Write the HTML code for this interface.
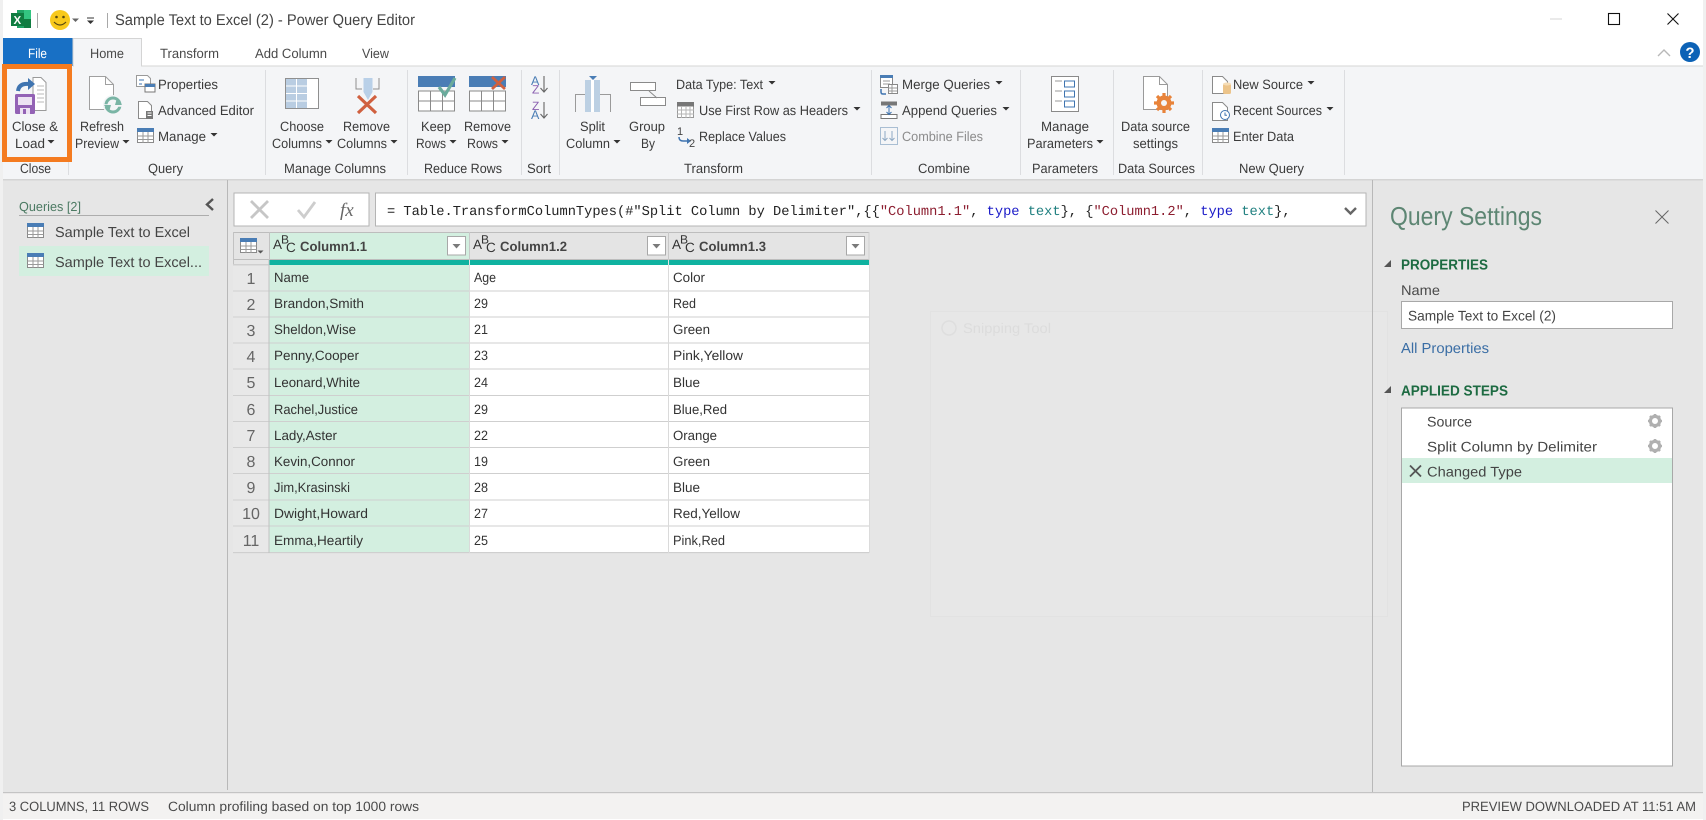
<!DOCTYPE html>
<html><head><meta charset="utf-8"><title>Power Query Editor</title>
<style>
html,body{margin:0;padding:0;background:#f0f0f0;width:1706px;height:820px;overflow:hidden}
svg{display:block}
text{font-family:"Liberation Sans",sans-serif;font-size:13.5px;fill:#3b3b3b;text-rendering:geometricPrecision}
.c{fill:#333;font-size:13.5px}
.g{fill:#4a4a4a;font-size:13.5px}
.h{font-weight:bold;font-size:13.5px;fill:#444}
.n{font-size:16px;fill:#666;text-anchor:middle}
.a{font-size:13.5px;fill:#333}
.s{fill:#1d6b42;font-weight:bold;font-size:14.5px}
.st{font-size:14px;fill:#444}
.m{font-family:"Liberation Mono",monospace;font-size:13.7px;fill:#222}
</style></head><body>
<svg width="1706" height="820" viewBox="0 0 1706 820" xmlns="http://www.w3.org/2000/svg">
<defs>
<g id="tbl"><rect x=".5" y=".5" width="16" height="14" fill="#fff" stroke="#8a8a8a"/><rect x="0" y="0" width="17" height="4" fill="#4a7db5"/><path d="M.5 8h16M.5 11.5h16M6 4v11M11 4v11" stroke="#9a9a9a" fill="none"/></g>
<g id="gear"><circle r="4.6" fill="none" stroke="#b0b0b0" stroke-width="3.2"/><path d="M0-7v3M0 4v3M-7 0h3M4 0h3M-5-5l2 2M3 3l2 2M-5 5l2-2M3-3l2-2" stroke="#b0b0b0" stroke-width="2.6"/></g>
<g id="flt"><rect x=".5" y=".5" width="18" height="18.5" fill="#fff" stroke="#a8a8a8"/><path d="M5.5 8h8l-4 4.5z" fill="#7a7a7a"/></g>
<g id="abc"><text x="0" y="17" class="a">A</text><text x="8" y="11.500" style="font-size:12px;fill:#333">B</text><text x="13" y="20" class="a">C</text></g>
<path id="car" d="M0 0h7l-3.5 3.5z" fill="#333"/>
</defs>

<!-- window -->
<rect x="3" y="0" width="1700" height="820" fill="#fff"/>
<rect x="3" y="180" width="1700" height="612" fill="#e6e6e6"/>
<rect x="3" y="66" width="1700" height="113" fill="#f4f5f7"/>
<rect x="3" y="179" width="1700" height="1.5" fill="#d4d4d4"/>
<rect x="3" y="793" width="1700" height="26" fill="#f3f2f1"/>
<rect x="3" y="792" width="1700" height="1.2" fill="#c4c4c4"/>

<!-- title bar -->
<rect x="17" y="10" width="14" height="18" fill="#21a366"/><rect x="24" y="10" width="7" height="9" fill="#33c481"/><rect x="24" y="19" width="7" height="9" fill="#107c41"/>
<rect x="11" y="13" width="13" height="13" fill="#107c41"/>
<text x="13.5" y="24" style="font-size:11.5px;font-weight:bold;fill:#fff">X</text>
<rect x="37" y="13" width="1" height="15" fill="#a8a8a8"/>
<circle cx="60" cy="20" r="10" fill="#f8c91c"/>
<circle cx="56.5" cy="17" r="1.3" fill="#5a4a10"/><circle cx="63.5" cy="17" r="1.3" fill="#5a4a10"/>
<path d="M54 22q6 6 12 0" fill="none" stroke="#5a4a10" stroke-width="1.2"/>
<path d="M72 18.500h7l-3.500 3.500z" fill="#666"/>
<path d="M87 18h7" stroke="#333" stroke-width="1"/><path d="M87 20.500h7l-3.500 3.500z" fill="#333"/>
<rect x="107" y="13" width="1" height="15" fill="#a8a8a8"/>
<text x="115" y="25" textLength="300" lengthAdjust="spacingAndGlyphs" style="font-size:15.500px;fill:#444">Sample Text to Excel (2) - Power Query Editor</text>
<rect x="1550" y="18.500" width="12" height="1" fill="#d4d4d4"/>
<rect x="1608.500" y="13.500" width="11" height="11" fill="none" stroke="#111" stroke-width="1.1"/>
<path d="M1667.500 13.500l11 11M1678.500 13.500l-11 11" stroke="#111" stroke-width="1.1"/>
<path d="M1658 56l6-6 6 6" fill="none" stroke="#b8b8b8" stroke-width="1.4"/>
<circle cx="1690" cy="52" r="10" fill="#0c62b6"/>
<text x="1690" y="58" text-anchor="middle" style="font-size:15px;font-weight:bold;fill:#fff">?</text>

<!-- tabs -->
<rect x="3" y="38" width="70" height="28" fill="#1870c5"/>
<text x="28" y="58" textLength="19" lengthAdjust="spacingAndGlyphs" style="fill:#fff;font-size:13.5px">File</text>
<path d="M73 66V38.500H141.500V66" fill="#f4f5f7" stroke="#d4d4d4"/>
<rect x="73" y="65.500" width="1630" height="1" fill="#d6d6d6"/><rect x="74" y="65" width="67" height="2" fill="#f4f5f7"/>
<text x="90" y="58" textLength="34" lengthAdjust="spacingAndGlyphs" class="g">Home</text>
<text x="160" y="58" textLength="59" lengthAdjust="spacingAndGlyphs" class="g">Transform</text>
<text x="255" y="58" textLength="72" lengthAdjust="spacingAndGlyphs" class="g">Add Column</text>
<text x="362" y="58" textLength="27" lengthAdjust="spacingAndGlyphs" class="g">View</text>

<!-- group separators -->
<g fill="#dcdde0"><rect x="68" y="70" width="1" height="105"/><rect x="265" y="70" width="1" height="105"/><rect x="407" y="70" width="1" height="105"/><rect x="521" y="70" width="1" height="105"/><rect x="559" y="70" width="1" height="105"/><rect x="871" y="70" width="1" height="105"/><rect x="1020" y="70" width="1" height="105"/><rect x="1113" y="70" width="1" height="105"/><rect x="1202" y="70" width="1" height="105"/><rect x="1344" y="70" width="1" height="105"/></g>

<!-- Close & Load -->
<path d="M33 77.500h8l5 5v28H33z" fill="#fff" stroke="#9a9a9a"/><path d="M37 86h7M37 90h7M37 94h7M37 98h7M37 102h7" stroke="#b8b8b8"/>
<path d="M18 91q1-8 11-7" fill="none" stroke="#3f74b0" stroke-width="4"/><path d="M28 78l7 6-7 6z" fill="#3f74b0"/>
<rect x="15" y="94" width="20" height="20" rx="1.500" fill="#9362b5"/><rect x="18" y="97" width="14" height="8" fill="#ece2f2"/><rect x="20" y="108" width="10" height="6" fill="#ece2f2"/><rect x="23" y="109" width="3" height="5" fill="#9362b5"/>
<rect x="4.500" y="66.500" width="65" height="93" fill="none" stroke="#f47b20" stroke-width="5"/>
<text x="12" y="131" textLength="46" lengthAdjust="spacingAndGlyphs">Close &amp;</text>
<text x="15" y="148" textLength="30" lengthAdjust="spacingAndGlyphs">Load</text><use href="#car" x="47.500" y="140"/>
<text x="20" y="173" textLength="31" lengthAdjust="spacingAndGlyphs">Close</text>

<!-- Query -->
<path d="M89.500 76.500h16l8 8v25h-24z" fill="#fff" stroke="#a0a0a0"/><path d="M105.500 76.500v8h8" fill="none" stroke="#a0a0a0"/>
<circle cx="113" cy="105" r="10" fill="#f4f5f7"/>
<circle cx="113" cy="105" r="7" fill="none" stroke="#7ab5a5" stroke-width="3"/>
<path d="M103 105.500h20" stroke="#f4f5f7" stroke-width="2.600"/>
<path d="M117 98l5 7h-7zM109 112l-5-7h7z" fill="#7ab5a5"/>
<path d="M136.500 75.500h11l3 3v8h-14z" fill="#fff" stroke="#9a9a9a"/><path d="M139 80h5M139 84h3" stroke="#3f74b0"/>
<rect x="145" y="84" width="10" height="8" fill="#fff" stroke="#777"/><rect x="145" y="84" width="10" height="3" fill="#4a7db5"/>
<text x="158" y="89" textLength="60" lengthAdjust="spacingAndGlyphs">Properties</text>
<path d="M138.500 101.500h9l4 4v13h-13z" fill="#fff" stroke="#8a8a8a"/><rect x="146" y="111" width="7" height="8" fill="#777"/><path d="M147.500 113h4M147.500 115.500h4" stroke="#fff"/>
<text x="158" y="115" textLength="96" lengthAdjust="spacingAndGlyphs">Advanced Editor</text>
<use href="#tbl" x="137" y="128"/>
<text x="158" y="141" textLength="48" lengthAdjust="spacingAndGlyphs">Manage</text><use href="#car" x="210.500" y="133"/>
<text x="80" y="131" textLength="44" lengthAdjust="spacingAndGlyphs">Refresh</text>
<text x="75" y="148" textLength="44" lengthAdjust="spacingAndGlyphs">Preview</text><use href="#car" x="122.500" y="140"/>
<text x="148" y="173" textLength="35" lengthAdjust="spacingAndGlyphs">Query</text>

<!-- Manage Columns -->
<rect x="285.500" y="78.500" width="33" height="30" fill="#fff" stroke="#8f8f8f"/><rect x="286" y="79" width="21" height="29" fill="#b9cde2"/>
<path d="M286 86h32M286 93.500h32M286 101h32M296.500 79v29M307.500 79v29" stroke="#fff" stroke-width="1"/>
<path d="M356 78v11h6M379 78v11h-6" fill="none" stroke="#8f8f8f"/><path d="M363.500 78h9v14l-4.500 8-4.500-8z" fill="#b9d0e8"/>
<path d="M358 96l18 17M376 96l-18 17" stroke="#d0603f" stroke-width="3.200"/>
<text x="280" y="131" textLength="44" lengthAdjust="spacingAndGlyphs">Choose</text>
<text x="272" y="148" textLength="50" lengthAdjust="spacingAndGlyphs">Columns</text><use href="#car" x="325.500" y="140"/>
<text x="343" y="131" textLength="47" lengthAdjust="spacingAndGlyphs">Remove</text>
<text x="337" y="148" textLength="50" lengthAdjust="spacingAndGlyphs">Columns</text><use href="#car" x="390.500" y="140"/>
<text x="284" y="173" textLength="102" lengthAdjust="spacingAndGlyphs">Manage Columns</text>

<!-- Reduce Rows -->
<rect x="418" y="76" width="37" height="11" fill="#4a7db5"/>
<rect x="418.500" y="91" width="36" height="20" fill="#fff" stroke="#8a8a8a"/><path d="M418 101h37M430.500 91v20M442.500 91v20" stroke="#8a8a8a"/>
<path d="M439 87l6 8 10-17" fill="none" stroke="#6aab9c" stroke-width="3.200"/>
<rect x="469" y="76" width="37" height="11" fill="#4a7db5"/>
<rect x="469.500" y="91" width="36" height="20" fill="#fff" stroke="#8a8a8a"/><path d="M469 101h37M481.500 91v20M493.500 91v20" stroke="#8a8a8a"/>
<path d="M492 77l13 12M505 77l-13 12" stroke="#d0603f" stroke-width="2.800"/>
<text x="421" y="131" textLength="30" lengthAdjust="spacingAndGlyphs">Keep</text>
<text x="416" y="148" textLength="30" lengthAdjust="spacingAndGlyphs">Rows</text><use href="#car" x="449.500" y="140"/>
<text x="464" y="131" textLength="47" lengthAdjust="spacingAndGlyphs">Remove</text>
<text x="467" y="148" textLength="31" lengthAdjust="spacingAndGlyphs">Rows</text><use href="#car" x="501.500" y="140"/>
<text x="424" y="173" textLength="78" lengthAdjust="spacingAndGlyphs">Reduce Rows</text>

<!-- Sort -->
<text x="531" y="85" style="font-size:12.500px;fill:#4a7db5">A</text><text x="532" y="93.500" style="font-size:12px;fill:#8a5fb0">Z</text>
<path d="M544 76v16M540.500 88l3.500 4 3.500-4" fill="none" stroke="#666" stroke-width="1.100"/>
<text x="532" y="110" style="font-size:12px;fill:#8a5fb0">Z</text><text x="531" y="119" style="font-size:12.500px;fill:#4a7db5">A</text>
<path d="M544 102v16M540.500 114l3.500 4 3.500-4" fill="none" stroke="#666" stroke-width="1.100"/>
<text x="527" y="173" textLength="24" lengthAdjust="spacingAndGlyphs">Sort</text>

<!-- Transform -->
<path d="M575.500 112V94.500H585M600 94.500h10.500V112" fill="none" stroke="#9a9a9a"/>
<rect x="585" y="80" width="15" height="32" fill="#bcd0e3"/><rect x="591" y="80" width="3" height="32" fill="#fff"/>
<path d="M589 76h8l-4 4z" fill="#4a7db5"/>
<text x="580" y="131" textLength="25" lengthAdjust="spacingAndGlyphs">Split</text>
<text x="566" y="148" textLength="44" lengthAdjust="spacingAndGlyphs">Column</text><use href="#car" x="613.500" y="140"/>
<rect x="630.500" y="82.500" width="25" height="8" fill="#fff" stroke="#8a8a8a"/><rect x="640.500" y="97.500" width="25" height="8" fill="#fff" stroke="#8a8a8a"/><path d="M649 91l8 7" stroke="#8a8a8a"/>
<text x="629" y="131" textLength="36" lengthAdjust="spacingAndGlyphs">Group</text>
<text x="641" y="148" textLength="14" lengthAdjust="spacingAndGlyphs">By</text>
<text x="676" y="89" textLength="87" lengthAdjust="spacingAndGlyphs">Data Type: Text</text><use href="#car" x="768.500" y="81"/>
<rect x="677.500" y="102.500" width="16" height="15" fill="#fff" stroke="#999"/><rect x="677" y="102" width="17" height="4.500" fill="#777"/><path d="M677 110h17M677 114h17M681.500 106v12M686 106v12M690 106v12" stroke="#b5b5b5"/>
<text x="699" y="115" textLength="149" lengthAdjust="spacingAndGlyphs">Use First Row as Headers</text><use href="#car" x="853.500" y="107"/>
<text x="677" y="135" style="font-size:11px;fill:#444">1</text><path d="M679 137q0 4 4 4h6" fill="none" stroke="#3f74b0" stroke-width="1.500"/><path d="M687 138l4 3-4 3z" fill="#3f74b0"/><text x="689" y="147" style="font-size:11px;fill:#444">2</text>
<text x="699" y="141" textLength="87" lengthAdjust="spacingAndGlyphs">Replace Values</text>
<text x="684" y="173" textLength="59" lengthAdjust="spacingAndGlyphs">Transform</text>

<!-- Combine -->
<rect x="880.500" y="75.500" width="12" height="12" fill="#fff" stroke="#888"/><rect x="880" y="75" width="13" height="3" fill="#4a7db5"/><path d="M883 81h7M883 84h7" stroke="#999"/>
<rect x="888.500" y="84.500" width="9" height="9" fill="#fff" stroke="#888"/><path d="M888 88h9M888 91h9M892 85v8" stroke="#999"/>
<path d="M881 89v3q0 2 2 2h3" fill="none" stroke="#3f74b0" stroke-width="1.500"/>
<text x="902" y="89" textLength="88" lengthAdjust="spacingAndGlyphs">Merge Queries</text><use href="#car" x="995.500" y="81"/>
<rect x="881" y="101.500" width="16" height="4" fill="#777"/><rect x="881" y="114.500" width="16" height="4" fill="#fff" stroke="#777"/><path d="M889 106v8M886.500 108l2.500-2.500 2.500 2.500M886.500 112l2.500 2.500 2.500-2.500" fill="none" stroke="#3f74b0"/>
<text x="902" y="115" textLength="95" lengthAdjust="spacingAndGlyphs">Append Queries</text><use href="#car" x="1002.500" y="107"/>
<rect x="880.500" y="127.500" width="17" height="17" fill="none" stroke="#a9bed3"/><path d="M885 131v9M882.500 138l2.500 2.500 2.500-2.500M892 131v9M889.500 138l2.500 2.500 2.500-2.500" fill="none" stroke="#8ea9c4"/>
<text x="902" y="141" textLength="81" lengthAdjust="spacingAndGlyphs" style="fill:#8c8c8c">Combine Files</text>
<text x="918" y="173" textLength="52" lengthAdjust="spacingAndGlyphs">Combine</text>

<!-- Parameters -->
<rect x="1051.500" y="76.500" width="27" height="35" fill="#fff" stroke="#8a8a8a"/>
<path d="M1055 81h7M1055 91h7M1055 101h7" stroke="#9a9a9a"/>
<rect x="1064.500" y="81" width="10" height="6" fill="#fff" stroke="#3f74b0"/><rect x="1064.500" y="91" width="10" height="6" fill="#fff" stroke="#3f74b0"/><rect x="1064.500" y="101" width="10" height="6" fill="#fff" stroke="#3f74b0"/>
<text x="1041" y="131" textLength="48" lengthAdjust="spacingAndGlyphs">Manage</text>
<text x="1027" y="148" textLength="66" lengthAdjust="spacingAndGlyphs">Parameters</text><use href="#car" x="1096.500" y="140"/>
<text x="1032" y="173" textLength="66" lengthAdjust="spacingAndGlyphs">Parameters</text>

<!-- Data Sources -->
<path d="M1143.500 76.500h16l8 8v25h-24z" fill="#fff" stroke="#9a9a9a"/><path d="M1159.500 76.500v8h8" fill="none" stroke="#9a9a9a"/>
<circle cx="1164" cy="103" r="5.500" fill="none" stroke="#e8833a" stroke-width="4"/><path d="M1164 93v20M1154 103h20M1157 96l14 14M1171 96l-14 14" stroke="#e8833a" stroke-width="3.200"/><circle cx="1164" cy="103" r="3" fill="#f4f5f7"/>
<text x="1121" y="131" textLength="69" lengthAdjust="spacingAndGlyphs">Data source</text>
<text x="1133" y="148" textLength="45" lengthAdjust="spacingAndGlyphs">settings</text>
<text x="1118" y="173" textLength="77" lengthAdjust="spacingAndGlyphs">Data Sources</text>

<!-- New Query -->
<path d="M1212.500 76.500h10l5 5v12h-15z" fill="#fff" stroke="#8a8a8a"/><rect x="1223" y="84" width="8" height="10" rx="1.500" fill="#ecc48a"/><ellipse cx="1227" cy="84" rx="4" ry="1.500" fill="#f5dcb5"/>
<text x="1233" y="89" textLength="70" lengthAdjust="spacingAndGlyphs">New Source</text><use href="#car" x="1307.500" y="81"/>
<path d="M1212.500 102.500h10l5 5v13h-15z" fill="#fff" stroke="#8a8a8a"/><circle cx="1225" cy="115" r="4.500" fill="#fff" stroke="#3f74b0"/><path d="M1225 112.500v2.800h2" fill="none" stroke="#3f74b0"/>
<text x="1233" y="115" textLength="89" lengthAdjust="spacingAndGlyphs">Recent Sources</text><use href="#car" x="1326.500" y="107"/>
<use href="#tbl" x="1212" y="128"/>
<text x="1233" y="141" textLength="61" lengthAdjust="spacingAndGlyphs">Enter Data</text>
<text x="1239" y="173" textLength="65" lengthAdjust="spacingAndGlyphs">New Query</text>

<!-- dividers -->
<rect x="227" y="180" width="1" height="610" fill="#b8b8b8"/>
<rect x="1372" y="180" width="1" height="612" fill="#b8b8b8"/>

<!-- snipping ghost -->
<rect x="930.500" y="311.500" width="457" height="305" fill="#e7e7e7" stroke="#e2e2e2"/>
<circle cx="949" cy="328" r="7" fill="none" stroke="#dedede" stroke-width="1.500"/>
<text x="963" y="333" textLength="88" lengthAdjust="spacingAndGlyphs" style="fill:#dcdcdc;font-size:14px">Snipping Tool</text>
<rect x="1372" y="311" width="1" height="306" fill="#b8b8b8"/>

<!-- queries pane -->
<text x="19" y="211" textLength="62" lengthAdjust="spacingAndGlyphs" style="fill:#4c7a63;font-size:13px">Queries [2]</text>
<rect x="19" y="215" width="190" height="1" fill="#adadad"/>
<path d="M213 199l-6 5.500 6 5.500" fill="none" stroke="#555" stroke-width="2.400"/>
<use href="#tbl" x="27" y="223"/>
<text x="55" y="237" textLength="135" lengthAdjust="spacingAndGlyphs" style="font-size:14.500px;fill:#444">Sample Text to Excel</text>
<rect x="19" y="246" width="190" height="30" fill="#d3efe0"/>
<use href="#tbl" x="27" y="253"/>
<text x="55" y="267" textLength="147" lengthAdjust="spacingAndGlyphs" style="font-size:14.500px;fill:#444">Sample Text to Excel...</text>

<!-- formula bar -->
<rect x="234" y="193" width="135" height="33" fill="#fff" stroke="#b4b4b4"/>
<path d="M251 201l17 17M268 201l-17 17" stroke="#c6c6c6" stroke-width="2.800"/>
<path d="M298 210l6 7 11-15" fill="none" stroke="#cdcdcd" stroke-width="2.800"/>
<text x="340" y="216" style="font-family:'Liberation Serif',serif;font-style:italic;font-size:19px;fill:#666">fx</text>
<rect x="375.500" y="193" width="990.500" height="33" fill="#fff" stroke="#b4b4b4"/>
<text x="387" y="215" class="m" xml:space="preserve">= Table.TransformColumnTypes(#"Split Column by Delimiter",{{<tspan fill="#8c1d2f">"Column1.1"</tspan>, <tspan fill="#1a1ac8">type</tspan> <tspan fill="#1f7f7f">text</tspan>}, {<tspan fill="#8c1d2f">"Column1.2"</tspan>, <tspan fill="#1a1ac8">type</tspan> <tspan fill="#1f7f7f">text</tspan>},</text>
<path d="M1345 208l5.500 5.500 5.500-5.500" fill="none" stroke="#666" stroke-width="2.400"/>

<!-- table header -->
<rect x="233" y="232" width="636" height="28" fill="#e4e4e4"/>
<rect x="269" y="233" width="200" height="27" fill="#d3efe0"/>
<rect x="233" y="232" width="636" height="1" fill="#bdbdbd"/>
<rect x="233" y="259" width="636" height="1" fill="#bdbdbd"/>
<rect x="233" y="232" width="1" height="321" fill="#c2c2c2"/>
<rect x="868.500" y="232" width="1" height="321" fill="#d0d0d0"/>
<rect x="269" y="232" width="1" height="28" fill="#c2c2c2"/><rect x="469" y="232" width="1" height="28" fill="#c8c8c8"/><rect x="668" y="232" width="1" height="28" fill="#c8c8c8"/>
<use href="#tbl" x="240" y="238"/><path d="M257.500 250.500h6l-3 3z" fill="#555"/>
<use href="#abc" x="273" y="232"/><text x="300" y="251" textLength="67" lengthAdjust="spacingAndGlyphs" class="h">Column1.1</text><use href="#flt" x="447" y="236"/>
<use href="#abc" x="473" y="232"/><text x="500" y="251" textLength="67" lengthAdjust="spacingAndGlyphs" class="h">Column1.2</text><use href="#flt" x="647" y="236"/>
<use href="#abc" x="672" y="232"/><text x="699" y="251" textLength="67" lengthAdjust="spacingAndGlyphs" class="h">Column1.3</text><use href="#flt" x="846" y="236"/>
<rect x="269" y="260" width="600" height="5" fill="#0fb2a0"/>
<rect x="469" y="260" width="1" height="5" fill="#e4e4e4"/><rect x="668" y="260" width="1" height="5" fill="#e4e4e4"/>

<!-- table body -->
<rect x="233" y="265" width="36" height="288" fill="#e8e8e8"/>
<rect x="269" y="265" width="200" height="288" fill="#d3efe0"/>
<rect x="469" y="265" width="400" height="288" fill="#fff"/>
<g fill="#cfcfcf"><rect x="233" y="264" width="36" height="1.500"/><rect x="233" y="290.500" width="636" height="1"/><rect x="233" y="316.500" width="636" height="1"/><rect x="233" y="342.500" width="636" height="1"/><rect x="233" y="368.500" width="636" height="1"/><rect x="233" y="395" width="636" height="1"/><rect x="233" y="421" width="636" height="1"/><rect x="233" y="447" width="636" height="1"/><rect x="233" y="473" width="636" height="1"/><rect x="233" y="499.500" width="636" height="1"/><rect x="233" y="525.500" width="636" height="1"/><rect x="233" y="552" width="636" height="1.200"/></g>
<g fill="#c2c2c2"><rect x="268.500" y="259" width="1" height="294"/></g>
<rect x="469" y="265" width="1" height="288" fill="#dadada"/><rect x="668" y="265" width="1" height="288" fill="#dadada"/>

<text x="251" y="284" class="n">1</text><text x="274" y="282" textLength="35" lengthAdjust="spacingAndGlyphs" class="c">Name</text><text x="474" y="282" textLength="22" lengthAdjust="spacingAndGlyphs" class="c">Age</text><text x="673" y="282" textLength="32" lengthAdjust="spacingAndGlyphs" class="c">Color</text>
<text x="251" y="310" class="n">2</text><text x="274" y="308" textLength="90" lengthAdjust="spacingAndGlyphs" class="c">Brandon,Smith</text><text x="474" y="308" textLength="14" lengthAdjust="spacingAndGlyphs" class="c">29</text><text x="673" y="308" textLength="23" lengthAdjust="spacingAndGlyphs" class="c">Red</text>
<text x="251" y="336" class="n">3</text><text x="274" y="334" textLength="82" lengthAdjust="spacingAndGlyphs" class="c">Sheldon,Wise</text><text x="474" y="334" textLength="14" lengthAdjust="spacingAndGlyphs" class="c">21</text><text x="673" y="334" textLength="37" lengthAdjust="spacingAndGlyphs" class="c">Green</text>
<text x="251" y="362" class="n">4</text><text x="274" y="360" textLength="85" lengthAdjust="spacingAndGlyphs" class="c">Penny,Cooper</text><text x="474" y="360" textLength="14" lengthAdjust="spacingAndGlyphs" class="c">23</text><text x="673" y="360" textLength="70" lengthAdjust="spacingAndGlyphs" class="c">Pink,Yellow</text>
<text x="251" y="388" class="n">5</text><text x="274" y="387" textLength="86" lengthAdjust="spacingAndGlyphs" class="c">Leonard,White</text><text x="474" y="387" textLength="14" lengthAdjust="spacingAndGlyphs" class="c">24</text><text x="673" y="387" textLength="27" lengthAdjust="spacingAndGlyphs" class="c">Blue</text>
<text x="251" y="415" class="n">6</text><text x="274" y="414" textLength="84" lengthAdjust="spacingAndGlyphs" class="c">Rachel,Justice</text><text x="474" y="414" textLength="14" lengthAdjust="spacingAndGlyphs" class="c">29</text><text x="673" y="414" textLength="54" lengthAdjust="spacingAndGlyphs" class="c">Blue,Red</text>
<text x="251" y="441" class="n">7</text><text x="274" y="440" textLength="63" lengthAdjust="spacingAndGlyphs" class="c">Lady,Aster</text><text x="474" y="440" textLength="14" lengthAdjust="spacingAndGlyphs" class="c">22</text><text x="673" y="440" textLength="44" lengthAdjust="spacingAndGlyphs" class="c">Orange</text>
<text x="251" y="467" class="n">8</text><text x="274" y="466" textLength="81" lengthAdjust="spacingAndGlyphs" class="c">Kevin,Connor</text><text x="474" y="466" textLength="14" lengthAdjust="spacingAndGlyphs" class="c">19</text><text x="673" y="466" textLength="37" lengthAdjust="spacingAndGlyphs" class="c">Green</text>
<text x="251" y="493" class="n">9</text><text x="274" y="492" textLength="76" lengthAdjust="spacingAndGlyphs" class="c">Jim,Krasinski</text><text x="474" y="492" textLength="14" lengthAdjust="spacingAndGlyphs" class="c">28</text><text x="673" y="492" textLength="27" lengthAdjust="spacingAndGlyphs" class="c">Blue</text>
<text x="251" y="519" class="n">10</text><text x="274" y="518" textLength="94" lengthAdjust="spacingAndGlyphs" class="c">Dwight,Howard</text><text x="474" y="518" textLength="14" lengthAdjust="spacingAndGlyphs" class="c">27</text><text x="673" y="518" textLength="67" lengthAdjust="spacingAndGlyphs" class="c">Red,Yellow</text>
<text x="251" y="546" class="n">11</text><text x="274" y="545" textLength="89" lengthAdjust="spacingAndGlyphs" class="c">Emma,Heartily</text><text x="474" y="545" textLength="14" lengthAdjust="spacingAndGlyphs" class="c">25</text><text x="673" y="545" textLength="52" lengthAdjust="spacingAndGlyphs" class="c">Pink,Red</text>

<!-- query settings -->
<text x="1390" y="225" textLength="152" lengthAdjust="spacingAndGlyphs" style="font-size:26px;fill:#5d8673">Query Settings</text>
<path d="M1655.500 210.500l13 13M1668.500 210.500l-13 13" stroke="#666" stroke-width="1"/>
<path d="M1391 260v7h-7z" fill="#555"/>
<text x="1401" y="269.500" textLength="87" lengthAdjust="spacingAndGlyphs" class="s">PROPERTIES</text>
<text x="1401" y="295" textLength="39" lengthAdjust="spacingAndGlyphs" class="g" style="font-size:14px">Name</text>
<rect x="1401.500" y="301.500" width="271" height="27" fill="#fff" stroke="#a8a8a8"/>
<text x="1408" y="320.500" textLength="148" lengthAdjust="spacingAndGlyphs" style="font-size:14px;fill:#444">Sample Text to Excel (2)</text>
<text x="1401" y="353" textLength="88" lengthAdjust="spacingAndGlyphs" style="font-size:14.500px;fill:#3b6ea5">All Properties</text>
<path d="M1391 386v7h-7z" fill="#555"/>
<text x="1401" y="395.500" textLength="107" lengthAdjust="spacingAndGlyphs" class="s">APPLIED STEPS</text>
<rect x="1401.500" y="408" width="271" height="358" fill="#fff" stroke="#a8a8a8"/>
<rect x="1402" y="458" width="270" height="25" fill="#d3efe0"/>
<text x="1427" y="426.500" textLength="45" lengthAdjust="spacingAndGlyphs" class="st">Source</text>
<text x="1427" y="451.500" textLength="170" lengthAdjust="spacingAndGlyphs" class="st">Split Column by Delimiter</text>
<text x="1427" y="476.500" textLength="95" lengthAdjust="spacingAndGlyphs" class="st">Changed Type</text>
<use href="#gear" x="1655" y="421"/><use href="#gear" x="1655" y="446"/>
<path d="M1410 465.500l11 11M1421 465.500l-11 11" stroke="#555" stroke-width="1.800"/>

<!-- status bar -->
<text x="9" y="811" textLength="140" lengthAdjust="spacingAndGlyphs" class="g">3 COLUMNS, 11 ROWS</text>
<text x="168" y="811" textLength="251" lengthAdjust="spacingAndGlyphs" class="g">Column profiling based on top 1000 rows</text>
<text x="1462" y="811" textLength="234" lengthAdjust="spacingAndGlyphs" class="g">PREVIEW DOWNLOADED AT 11:51 AM</text>
</svg>
</body></html>
